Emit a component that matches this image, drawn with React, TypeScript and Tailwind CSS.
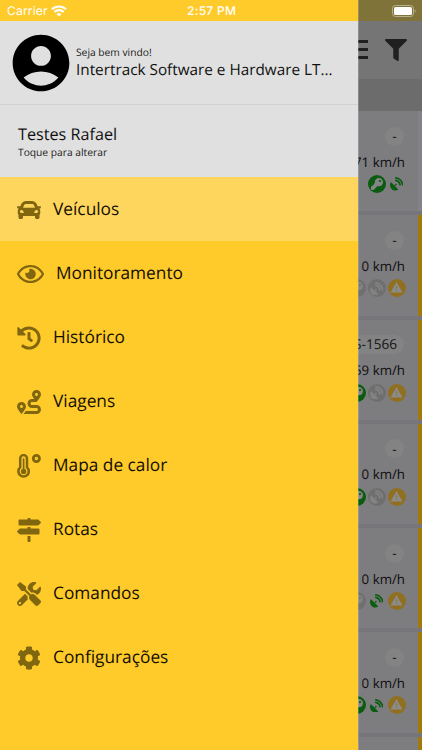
import {
  FaCar,
  FaRegEye,
  FaHistory,
  FaRoute,
  FaMapSigns,
  FaTools,
  FaCog,
  FaFilter,
  FaKey,
  FaSatelliteDish,
} from "react-icons/fa";
import { MdAccountCircle, MdWarning } from "react-icons/md";
import clsx from "clsx";

function Thermometer({ className }: { className?: string }) {
  return (
    <svg className={className} viewBox="0 0 24 24" fill="none" stroke="currentColor">
      <path d="M3.2 4.5a3.4 3.4 0 0 1 6.8 0v8.9a5.2 5.2 0 1 1-6.8 0Z" strokeWidth="2.5" />
      <path d="M6.6 5v12" strokeWidth="1.7" strokeLinecap="round" />
      <circle cx="6.6" cy="17.4" r="2.7" fill="currentColor" stroke="none" />
      <circle cx="19.4" cy="4.5" r="3.1" strokeWidth="2.8" />
    </svg>
  );
}

const menu = [
  { label: "Veículos", icon: FaCar, active: true },
  { label: "Monitoramento", icon: FaRegEye, wide: true },
  { label: "Histórico", icon: FaHistory },
  { label: "Viagens", icon: FaRoute },
  { label: "Mapa de calor", icon: Thermometer },
  { label: "Rotas", icon: FaMapSigns },
  { label: "Comandos", icon: FaTools },
  { label: "Configurações", icon: FaCog },
];

const vehicles = [
  { plate: "-", speed: "71 km/h", ignition: true, signal: true, alert: false },
  { plate: "-", speed: "0 km/h", ignition: false, signal: false, alert: true },
  { plate: "FGS-1566", speed: "59 km/h", ignition: true, signal: false, alert: true },
  { plate: "-", speed: "0 km/h", ignition: true, signal: false, alert: true },
  { plate: "-", speed: "0 km/h", ignition: false, signal: true, alert: true },
  { plate: "-", speed: "0 km/h", ignition: true, signal: true, alert: true },
];

function VehicleCard({ plate, speed, ignition, signal, alert }: (typeof vehicles)[number]) {
  return (
    <div
      className={clsx(
        "h-[100.3px] shrink-0 flex flex-col items-end bg-[#7d7d80] pr-[13px] pt-[15.5px] border-r-4",
        alert ? "border-[#a17a0b]" : "border-[#838387]"
      )}
    >
      <div className="h-[19px] min-w-[19px] mr-px px-[7px] rounded-full bg-[#838383] flex items-center justify-center text-[13.6px] text-[#141414]">
        {plate}
      </div>
      <div className="mt-[6px] h-5 leading-5 text-[13.3px] text-[#0c0c0c] whitespace-nowrap">{speed}</div>
      <div className="mt-[3.5px] mr-[-0.5px] flex gap-[2px]">
        <span
          className={clsx(
            "w-[18px] h-[18px] rounded-full flex items-center justify-center",
            ignition ? "bg-[#0b5c10] text-[#858585]" : "bg-[#6f6f6f] text-[#838383]"
          )}
        >
          <FaKey className="w-3 h-3 -scale-x-100 rotate-90" />
        </span>
        <span
          className={clsx(
            "w-[18px] h-[18px] rounded-full flex items-center justify-center",
            signal ? "text-[#0b5c10]" : "bg-[#6f6f6f] text-[#838383]"
          )}
        >
          <FaSatelliteDish className="w-[13.5px] h-[13.5px]" />
        </span>
        {alert && (
          <span className="w-[18px] h-[18px] rounded-full flex items-center justify-center bg-[#907020] text-[#8b8b8b]">
            <MdWarning className="w-[13px] h-[13px] mb-px" />
          </span>
        )}
      </div>
    </div>
  );
}

function StatusBar() {
  return (
    <div className="h-[21px] shrink-0 flex items-center bg-[#ffcb2b] pl-[7px] font-['Inter',sans-serif] text-[12px] text-white">
      <span className="w-[39px] tracking-[0.2px]">Carrier</span>
      <svg className="ml-[5px] w-4 h-3" viewBox="0 0 16 12" fill="none" stroke="white" strokeWidth="2.1">
        <path d="M1 4.3a10 10 0 0 1 14 0M3.4 7a6.6 6.6 0 0 1 9.2 0" />
        <path d="M8 11.6 5.6 9.2a3.4 3.4 0 0 1 4.8 0Z" fill="white" stroke="none" />
      </svg>
      <span className="ml-[120px] pt-px font-medium tracking-[0.3px] whitespace-nowrap">2:57 PM</span>
    </div>
  );
}

function Drawer() {
  return (
    <aside className="absolute left-0 top-0 w-[358px] h-[750px] flex flex-col bg-[#ffcb2b] shadow-[0.5px_0_0.5px_rgba(255,255,255,0.2)]">
      <StatusBar />
      <div className="h-[84px] shrink-0 flex items-center bg-[#e0e0e0] border-b border-[#d0d0d0] pl-[7px]">
        <MdAccountCircle className="w-[68px] h-[68px] shrink-0 text-black" />
        <div className="ml-[1px] pt-px">
          <p className="text-[10.25px] leading-[14px] text-[#222]">Seja bem vindo!</p>
          <p className="text-[15.3px] leading-[21px] text-[#111] whitespace-nowrap">Intertrack Software e Hardware LT...</p>
        </div>
      </div>
      <div className="h-[72px] shrink-0 bg-[#e0e0e0] pl-[18px] pt-[18px]">
        <p className="text-[16.2px] leading-[22px] text-[#111]">Testes Rafael</p>
        <p className="text-[10.25px] leading-[16px] text-[#222]">Toque para alterar</p>
      </div>
      <nav className="flex flex-col">
        {menu.map(({ label, icon: Icon, active, wide }) => (
          <a
            key={label}
            className={clsx("h-16 flex items-center pl-[17px] text-[17.3px] text-[#140f00]", active && "bg-[#ffd65d]")}
          >
            <Icon className={clsx("shrink-0 text-[#80660f] mt-px mr-3 h-6", wide ? "w-[27px]" : "w-6")} />
            <span className="pt-[2px]">{label}</span>
          </a>
        ))}
      </nav>
    </aside>
  );
}

export default function App() {
  return (
    <div className="relative w-[422px] h-[750px] overflow-hidden flex flex-col bg-[#76767a] font-['Open_Sans',sans-serif] [text-rendering:geometricPrecision]">
      <div className="h-[21px] shrink-0 bg-[#80733a] flex items-center justify-end pr-[6px]">
        <svg className="w-6 h-3" viewBox="0 0 24 12">
          <rect x="0.5" y="0.5" width="21" height="11" rx="3" fill="none" stroke="#b9b18c" />
          <rect x="2" y="2" width="18" height="8" rx="1.6" fill="white" />
          <path d="M22.6 4.2v3.6c1.4-.5 1.4-3.1 0-3.6Z" fill="#b9b18c" />
        </svg>
      </div>
      <div className="h-[58px] shrink-0 bg-[#757575] flex items-center justify-end pr-[15px] text-[#202020]">
        <div className="w-5 mr-[17px] mb-px flex flex-col gap-[5px]">
          <i className="h-[3px] bg-[#202020]" />
          <i className="h-[3px] bg-[#202020]" />
          <i className="h-[3px] bg-[#202020]" />
        </div>
        <FaFilter className="w-[22px] h-[22px]" />
      </div>
      <div className="h-[32px] shrink-0 bg-[#6c6c6c]" />
      <div className="flex flex-col gap-[4px]">
        {vehicles.map((vehicle, i) => (
          <VehicleCard key={i} {...vehicle} />
        ))}
        <div className="h-[100.3px] bg-[#7d7d80] border-r-4 border-[#a17a0b]" />
      </div>
      <Drawer />
    </div>
  );
}
